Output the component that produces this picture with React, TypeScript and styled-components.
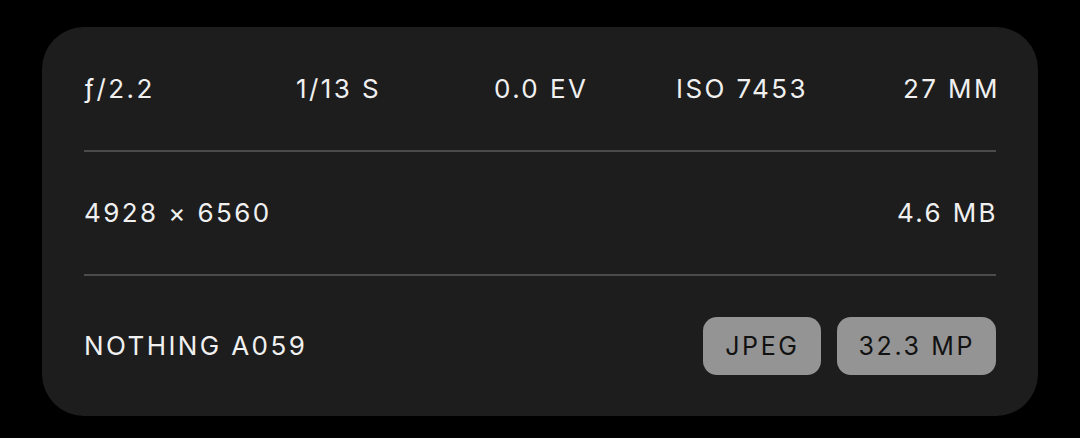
import React from "react";
import styled, { createGlobalStyle } from "styled-components";

const Global = createGlobalStyle`
  html, body { margin: 0; padding: 0; background: #000; }
  body { font-family: Inter, "Noto Sans", sans-serif; }
`;

const Page = styled.div`
  width: 1080px;
  height: 438px;
  background: #000;
  padding: 27px 42px 0 42px;
  box-sizing: border-box;
`;

const Card = styled.div`
  width: 996px;
  height: 389px;
  box-sizing: border-box;
  background: #1d1d1d;
  border-radius: 42px;
  padding: 0 42px;
  display: flex;
  flex-direction: column;
`;

const Row = styled.div<{ $h: number }>`
  height: ${(p) => p.$h}px;
  display: flex;
  align-items: center;
  justify-content: space-between;
`;

const ExposureRow = styled.div`
  height: 123px;
  display: grid;
  grid-template-columns: 212px 198px 182px 227px 1fr;
  align-items: center;
`;

const Divider = styled.div`
  height: 2px;
  background: #4b4b4b;
`;

const Value = styled.span<{ $right?: boolean }>`
  color: #f0f0f0;
  font-size: 26px;
  letter-spacing: 2.4px;
  line-height: 40px;
  font-weight: 400;
  white-space: nowrap;
  justify-self: ${(p) => (p.$right ? "end" : "start")};
  margin-right: ${(p) => (p.$right ? "-2px" : "0")};
`;

const Badges = styled.div`
  display: flex;
  gap: 16px;
`;

const Badge = styled.span`
  height: 58px;
  padding: 0 21px 0 22px;
  box-sizing: border-box;
  display: inline-flex;
  align-items: center;
  background: #949494;
  color: #121212;
  border-radius: 14px;
  font-size: 25px;
  letter-spacing: 2.6px;
  font-weight: 400;
`;

const exposure = ["ƒ/2.2", "1/13 S", "0.0 EV", "ISO 7453", "27 MM"];

export default function App() {
  return (
    <>
      <Global />
      <Page>
        <Card>
          <ExposureRow>
            {exposure.map((v, i) => (
              <Value key={v} $right={i === exposure.length - 1}>
                {v}
              </Value>
            ))}
          </ExposureRow>
          <Divider />
          <Row $h={122}>
            <Value>4928 × 6560</Value>
            <Value $right>4.6 MB</Value>
          </Row>
          <Divider />
          <Row $h={140}>
            <Value>NOTHING A059</Value>
            <Badges>
              <Badge>JPEG</Badge>
              <Badge>32.3 MP</Badge>
            </Badges>
          </Row>
        </Card>
      </Page>
    </>
  );
}
